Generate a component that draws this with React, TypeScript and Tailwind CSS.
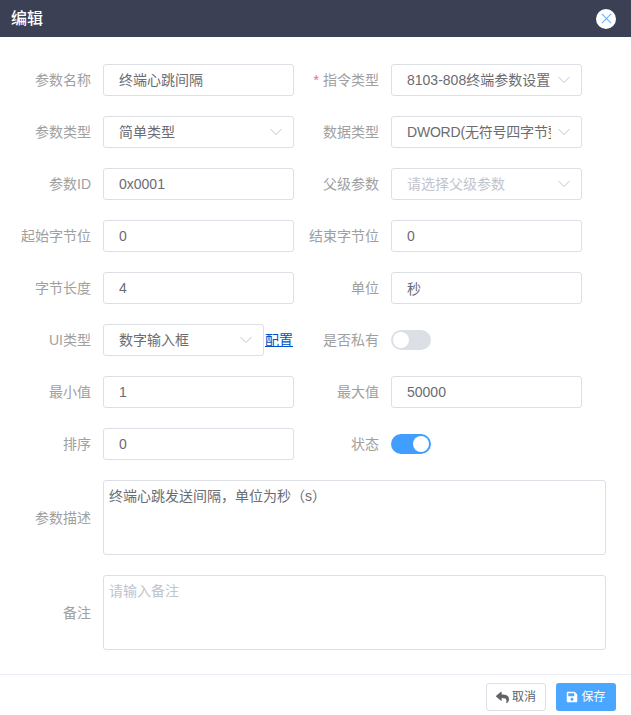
import { FaReply, FaSave } from 'react-icons/fa';

const inputClass =
  'h-8 w-full rounded-[3px] border border-[#dcdfe6] bg-white px-[15px] text-sm text-[#6a6c72] outline-none placeholder:text-[#c0c4cc]';

function Label({ text, width, required }: { text: string; width: string; required?: boolean }) {
  return (
    <label className={`${width} shrink-0 whitespace-nowrap pr-3 text-right text-sm text-[#a0a0a0]`}>
      {required && <span className="mr-1 text-[#f56c6c]">*</span>}
      {text}
    </label>
  );
}

function TextInput({ value, placeholder, className = '' }: { value?: string; placeholder?: string; className?: string }) {
  return <input readOnly value={value ?? ''} placeholder={placeholder} className={`${inputClass} ${className}`} />;
}

function Select({
  value,
  placeholder,
  width = 'w-[191px]',
  className = '',
}: {
  value?: string;
  placeholder?: string;
  width?: string;
  className?: string;
}) {
  return (
    <div className={`relative ${width} shrink-0`}>
      <input readOnly value={value ?? ''} placeholder={placeholder} className={`${inputClass} pr-[30px] ${className}`} />
      <svg
        className="absolute right-[11px] top-[11px] h-[10px] w-[14px] text-[#c0c4cc]"
        viewBox="0 0 14 10"
        fill="none"
        stroke="currentColor"
        strokeWidth="1"
      >
        <path d="M1.5 2 L7 7.5 L12.5 2" />
      </svg>
    </div>
  );
}

function Switch({ on }: { on: boolean }) {
  return (
    <div className={`flex h-5 w-10 items-center rounded-full px-0.5 ${on ? 'justify-end bg-[#409eff]' : 'justify-start bg-[#dcdfe6]'}`}>
      <div className="h-4 w-4 rounded-full bg-white" />
    </div>
  );
}

function Row({ children }: { children: React.ReactNode }) {
  return <div className="mb-5 flex h-8 items-center">{children}</div>;
}

function Cell({ children }: { children: React.ReactNode }) {
  return <div className="w-[191px] shrink-0">{children}</div>;
}

const LEFT = 'w-[103px]';
const RIGHT = 'w-[97px]';

export default function App() {
  return (
    <div className="flex h-[715px] w-[631px] flex-col overflow-hidden bg-white font-['Liberation_Sans','Noto_Sans_CJK_SC',sans-serif]">
      <div className="flex h-[37px] shrink-0 items-center justify-between bg-[#3b4055] pl-[11px] pr-[15px]">
        <span className="text-base font-medium text-white">编辑</span>
        <div className="flex h-5 w-5 items-center justify-center rounded-full bg-white">
          <svg className="h-[11px] w-[11px] text-[#66b1ff]" viewBox="0 0 12 12" fill="none" stroke="currentColor" strokeWidth="1.2">
            <path d="M1 1 L11 11 M11 1 L1 11" />
          </svg>
        </div>
      </div>

      <div className="flex-1 pt-[27px]">
        <Row>
          <Label text="参数名称" width={LEFT} />
          <Cell><TextInput value="终端心跳间隔" className="pb-[2px]" /></Cell>
          <Label text="指令类型" width={RIGHT} required />
          <Select value="8103-808终端参数设置" className="pb-[2px]" />
        </Row>
        <Row>
          <Label text="参数类型" width={LEFT} />
          <Select value="简单类型" className="pb-[2px]" />
          <Label text="数据类型" width={RIGHT} />
          <Select value="DWORD(无符号四字节整型)" className="pb-[2px] tracking-[-0.2px]" />
        </Row>
        <Row>
          <Label text="参数ID" width={LEFT} />
          <Cell><TextInput value="0x0001" /></Cell>
          <Label text="父级参数" width={RIGHT} />
          <Select placeholder="请选择父级参数" />
        </Row>
        <Row>
          <Label text="起始字节位" width={LEFT} />
          <Cell><TextInput value="0" /></Cell>
          <Label text="结束字节位" width={RIGHT} />
          <Cell><TextInput value="0" /></Cell>
        </Row>
        <Row>
          <Label text="字节长度" width={LEFT} />
          <Cell><TextInput value="4" /></Cell>
          <Label text="单位" width={RIGHT} />
          <Cell><TextInput value="秒" /></Cell>
        </Row>
        <Row>
          <Label text="UI类型" width={LEFT} />
          <Select value="数字输入框" width="w-[161px]" className="pb-[2px]" />
          <a className="ml-px w-[29px] shrink-0 whitespace-nowrap text-sm text-[#0052cc] underline">配置</a>
          <Label text="是否私有" width={RIGHT} />
          <Switch on={false} />
        </Row>
        <Row>
          <Label text="最小值" width={LEFT} />
          <Cell><TextInput value="1" /></Cell>
          <Label text="最大值" width={RIGHT} />
          <Cell><TextInput value="50000" /></Cell>
        </Row>
        <Row>
          <Label text="排序" width={LEFT} />
          <Cell><TextInput value="0" /></Cell>
          <Label text="状态" width={RIGHT} />
          <Switch on />
        </Row>
        <div className="mb-5 flex h-[75px] items-center">
          <Label text="参数描述" width={LEFT} />
          <textarea
            readOnly
            value="终端心跳发送间隔，单位为秒（s）"
            className="h-[75px] w-[503px] resize-none rounded-[3px] border border-[#dcdfe6] p-[5px] text-sm leading-[21px] text-[#6a6c72] outline-none"
          />
        </div>
        <div className="flex h-[75px] items-center">
          <Label text="备注" width={LEFT} />
          <textarea
            readOnly
            placeholder="请输入备注"
            className="h-[75px] w-[503px] resize-none rounded-[3px] border border-[#dcdfe6] p-[5px] text-sm leading-[21px] text-[#606266] outline-none placeholder:text-[#c0c4cc]"
          />
        </div>
      </div>

      <div className="flex h-[41px] shrink-0 justify-end gap-[10px] border-t border-[#ebeef5] pr-[15px] pt-2">
        <button className="flex h-7 w-[60px] items-center justify-center gap-[3px] rounded-[3px] border border-[#dcdfe6] bg-white text-xs text-[#606266]">
          <FaReply className="h-[13px] w-[13px]" />
          取消
        </button>
        <button className="flex h-7 w-[60px] items-center justify-center gap-[3px] rounded-[3px] bg-[#4aa6ff] text-xs text-white">
          <FaSave className="h-3 w-3" />
          保存
        </button>
      </div>
    </div>
  );
}
